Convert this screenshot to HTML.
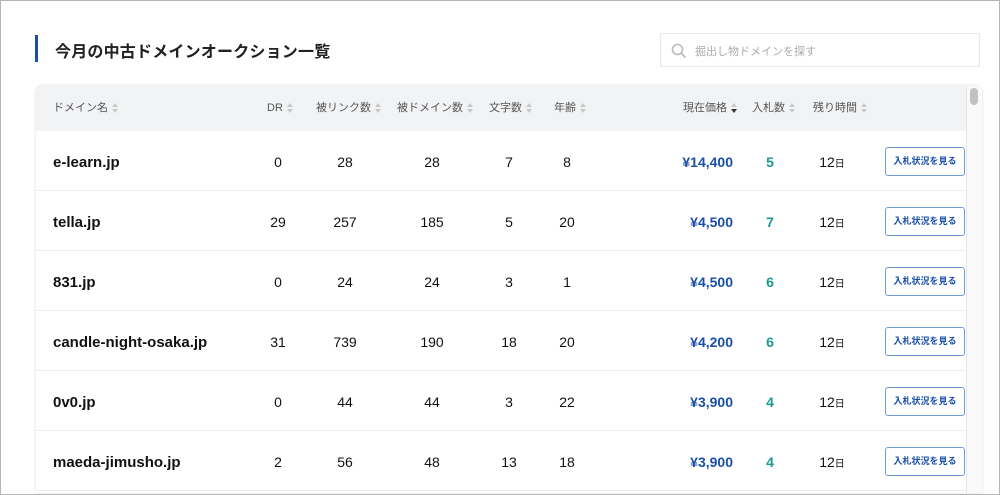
<!DOCTYPE html><html><head><meta charset="utf-8"><style>
*{box-sizing:border-box;margin:0;padding:0}
html,body{width:1000px;height:495px;overflow:hidden}
body{background:#fff;font-family:"Liberation Sans","Noto Sans CJK JP",sans-serif;position:relative}
.frame{position:absolute;left:0;top:0;width:1000px;height:495px;border:1px solid #b5b5b5;pointer-events:none;z-index:5}
.bar{position:absolute;left:35px;top:35px;width:3px;height:27px;background:#1a4fa8}
h1{position:absolute;left:55px;top:38px;font-size:16px;font-weight:bold;color:#222;letter-spacing:.2px}
.search{position:absolute;left:660px;top:33px;width:320px;height:34px;border:1px solid #e8e8e8;border-radius:2px}
.search span{position:absolute;left:34px;top:9px;font-size:11px;color:#aaa}
.panel{position:absolute;left:36px;top:86px;width:946px;height:407px;border-radius:6px 6px 0 0;box-shadow:0 0 3px rgba(0,0,0,.15);overflow:hidden;background:#fff}
.head{position:absolute;left:0;top:0;width:930px;height:45px;background:#f2f3f5}
.c{position:absolute;font-size:11px;color:#555;top:15px;white-space:nowrap;line-height:14px}
.s{display:inline-block;width:6px;height:10px;position:relative;margin-left:4px;vertical-align:middle}
.s:before{content:"";position:absolute;left:0;top:0;border:3px solid transparent;border-bottom:4px solid #c8c8c8;border-top:0}
.s:after{content:"";position:absolute;left:0;top:6px;border:3px solid transparent;border-top:4px solid #c8c8c8;border-bottom:0}
.s.d:after{border-top-color:#333}
.row{position:absolute;left:0;width:930px;height:60px;border-bottom:1px solid #ececec}
.row div{position:absolute;top:23px;font-size:14px;color:#111;white-space:nowrap}
.dn{left:17px;font-weight:bold;font-size:15px!important}
.n{transform:translateX(-50%)}
.p{right:233px;color:#1a4fa8!important;font-weight:bold}
.b{color:#1a9a90!important;font-weight:bold}
.btn{left:849px;top:16px!important;width:80px;height:29px;border:1px solid #6f9bd6;border-radius:3px;font-size:9px!important;font-weight:bold;color:#1a4fa8!important;text-align:center;line-height:27px}
.sb{position:absolute;left:930px;top:0;width:16px;height:420px;background:#fafafa;border-left:1px solid #e5e5e5}
.th{position:absolute;left:3px;top:2px;width:8px;height:17px;border-radius:4px;background:#c2c2c2}
sm{font-size:10px}
</style></head><body>
<div class="frame"></div>
<div class="bar"></div><h1>今月の中古ドメインオークション一覧</h1>
<div class="search"><svg style="position:absolute;left:10px;top:9px" width="16" height="16" viewBox="0 0 16 16"><circle cx="6.5" cy="6.5" r="5" fill="none" stroke="#bbb" stroke-width="1.6"/><path d="M10 10l4.5 4.5" stroke="#bbb" stroke-width="1.8"/></svg><span>掘出し物ドメインを探す</span></div>
<div class="panel">
<div class="head">
<div class="c" style="left:17px">ドメイン名<i class="s"></i></div>
<div class="c" style="left:231px">DR<i class="s"></i></div>
<div class="c" style="left:280px">被リンク数<i class="s"></i></div>
<div class="c" style="left:361px">被ドメイン数<i class="s"></i></div>
<div class="c" style="left:453px">文字数<i class="s"></i></div>
<div class="c" style="left:518px">年齢<i class="s"></i></div>
<div class="c" style="left:647px">現在価格<i class="s d"></i></div>
<div class="c" style="left:716px">入札数<i class="s"></i></div>
<div class="c" style="left:777px">残り時間<i class="s"></i></div>
</div>
<div class="row" style="top:45px"><div class="dn">e-learn.jp</div><div class="n" style="left:242px">0</div><div class="n" style="left:309px">28</div><div class="n" style="left:396px">28</div><div class="n" style="left:473px">7</div><div class="n" style="left:531px">8</div><div class="p">¥14,400</div><div class="n b" style="left:734px">5</div><div class="n" style="left:796px">12<sm>日</sm></div><div class="btn">入札状況を見る</div></div>
<div class="row" style="top:105px"><div class="dn">tella.jp</div><div class="n" style="left:242px">29</div><div class="n" style="left:309px">257</div><div class="n" style="left:396px">185</div><div class="n" style="left:473px">5</div><div class="n" style="left:531px">20</div><div class="p">¥4,500</div><div class="n b" style="left:734px">7</div><div class="n" style="left:796px">12<sm>日</sm></div><div class="btn">入札状況を見る</div></div>
<div class="row" style="top:165px"><div class="dn">831.jp</div><div class="n" style="left:242px">0</div><div class="n" style="left:309px">24</div><div class="n" style="left:396px">24</div><div class="n" style="left:473px">3</div><div class="n" style="left:531px">1</div><div class="p">¥4,500</div><div class="n b" style="left:734px">6</div><div class="n" style="left:796px">12<sm>日</sm></div><div class="btn">入札状況を見る</div></div>
<div class="row" style="top:225px"><div class="dn">candle-night-osaka.jp</div><div class="n" style="left:242px">31</div><div class="n" style="left:309px">739</div><div class="n" style="left:396px">190</div><div class="n" style="left:473px">18</div><div class="n" style="left:531px">20</div><div class="p">¥4,200</div><div class="n b" style="left:734px">6</div><div class="n" style="left:796px">12<sm>日</sm></div><div class="btn">入札状況を見る</div></div>
<div class="row" style="top:285px"><div class="dn">0v0.jp</div><div class="n" style="left:242px">0</div><div class="n" style="left:309px">44</div><div class="n" style="left:396px">44</div><div class="n" style="left:473px">3</div><div class="n" style="left:531px">22</div><div class="p">¥3,900</div><div class="n b" style="left:734px">4</div><div class="n" style="left:796px">12<sm>日</sm></div><div class="btn">入札状況を見る</div></div>
<div class="row" style="top:345px"><div class="dn">maeda-jimusho.jp</div><div class="n" style="left:242px">2</div><div class="n" style="left:309px">56</div><div class="n" style="left:396px">48</div><div class="n" style="left:473px">13</div><div class="n" style="left:531px">18</div><div class="p">¥3,900</div><div class="n b" style="left:734px">4</div><div class="n" style="left:796px">12<sm>日</sm></div><div class="btn">入札状況を見る</div></div>
<div class="sb"><div class="th"></div></div>
</div>
</body></html>
